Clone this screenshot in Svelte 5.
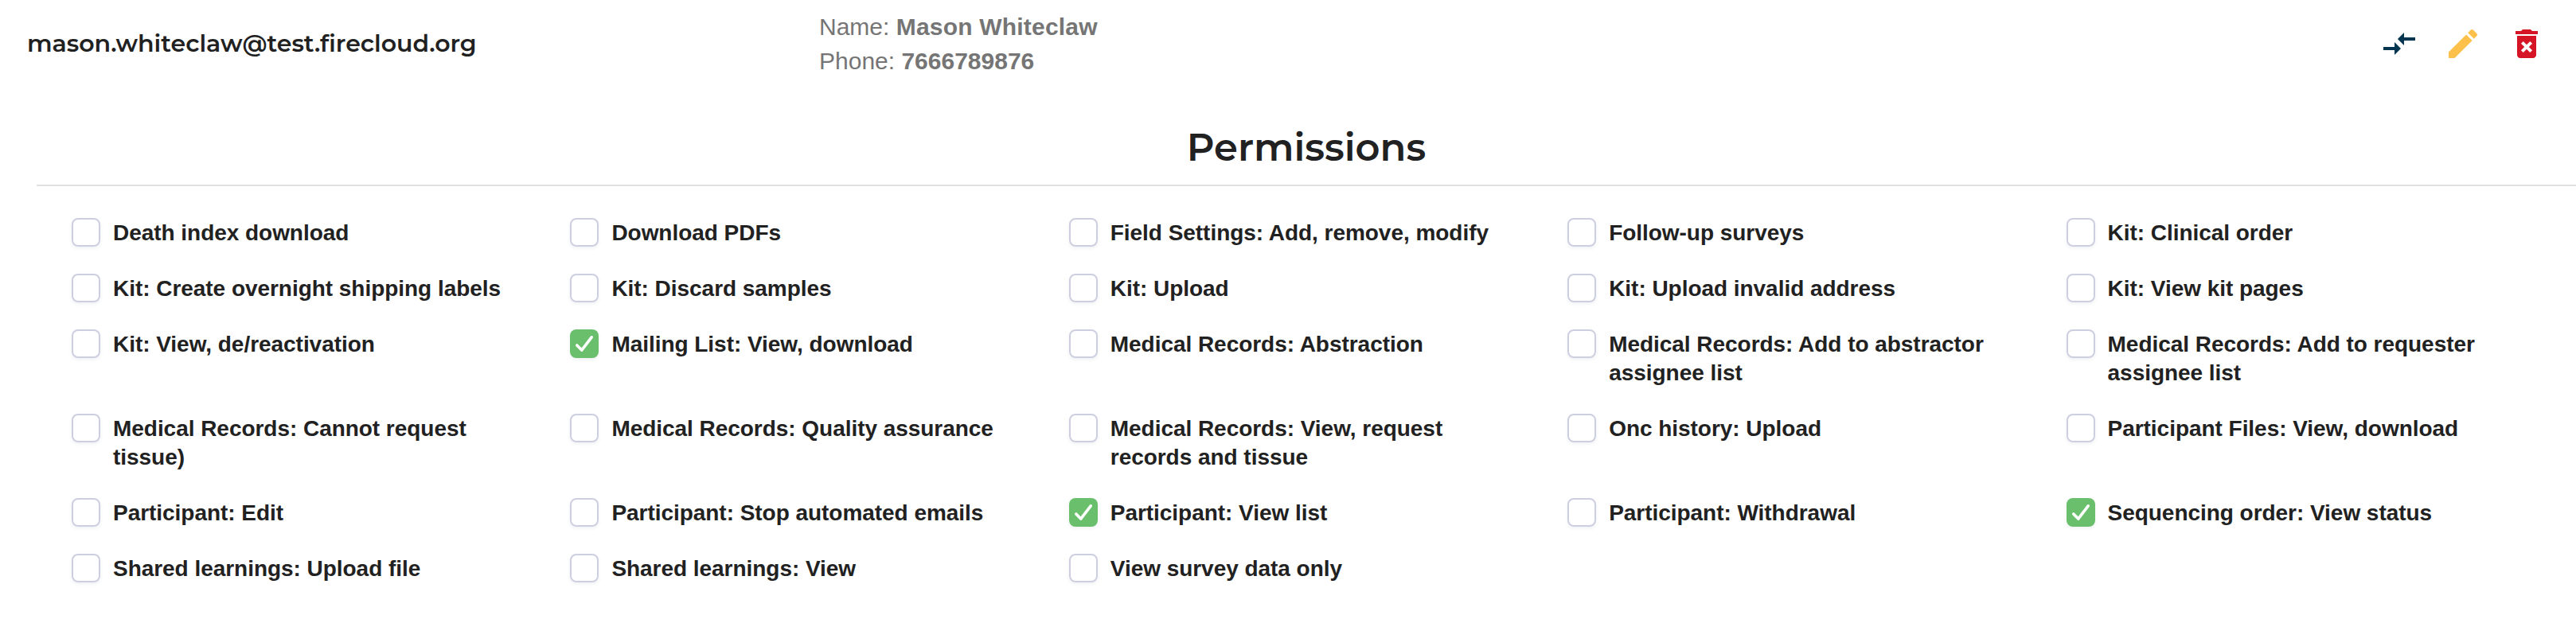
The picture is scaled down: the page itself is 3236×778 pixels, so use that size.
<script>
  const user = {
    email: 'mason.whiteclaw@test.firecloud.org',
    name: 'Mason Whiteclaw',
    phone: '7666789876'
  };

  let permissions = $state([
    { label: 'Death index download', checked: false },
    { label: 'Download PDFs', checked: false },
    { label: 'Field Settings: Add, remove, modify', checked: false },
    { label: 'Follow-up surveys', checked: false },
    { label: 'Kit: Clinical order', checked: false },
    { label: 'Kit: Create overnight shipping labels', checked: false },
    { label: 'Kit: Discard samples', checked: false },
    { label: 'Kit: Upload', checked: false },
    { label: 'Kit: Upload invalid address', checked: false },
    { label: 'Kit: View kit pages', checked: false },
    { label: 'Kit: View, de/reactivation', checked: false },
    { label: 'Mailing List: View, download', checked: true },
    { label: 'Medical Records: Abstraction', checked: false },
    { label: 'Medical Records: Add to abstractor assignee list', checked: false },
    { label: 'Medical Records: Add to requester assignee list', checked: false },
    { label: 'Medical Records: Cannot request tissue)', checked: false },
    { label: 'Medical Records: Quality assurance', checked: false },
    { label: 'Medical Records: View, request records and tissue', checked: false },
    { label: 'Onc history: Upload', checked: false },
    { label: 'Participant Files: View, download', checked: false },
    { label: 'Participant: Edit', checked: false },
    { label: 'Participant: Stop automated emails', checked: false },
    { label: 'Participant: View list', checked: true },
    { label: 'Participant: Withdrawal', checked: false },
    { label: 'Sequencing order: View status', checked: true },
    { label: 'Shared learnings: Upload file', checked: false },
    { label: 'Shared learnings: View', checked: false },
    { label: 'View survey data only', checked: false }
  ]);
</script>

<main>
  <header>
    <div class="email">{user.email}</div>
    <div class="details">
      <div>Name: <b class="name">{user.name}</b></div>
      <div>Phone: <b>{user.phone}</b></div>
    </div>
    <div class="actions">
      <button aria-label="Compare">
        <svg viewBox="0 0 24 24" fill="#033550"><path d="M9.01 14H2v2h7.01v3L13 15l-3.99-4v3zm5.98-1v-3H22V8h-7.01V5L11 9l3.99 4z" /></svg>
      </button>
      <button aria-label="Edit">
        <svg viewBox="0 0 24 24" fill="#fcc04b"><path d="M3 17.25V21h3.75L17.81 9.94l-3.75-3.75L3 17.25zM20.71 7.04a1 1 0 0 0 0-1.41l-2.34-2.34a1 1 0 0 0-1.41 0l-1.83 1.83 3.75 3.75 1.83-1.83z" /></svg>
      </button>
      <button aria-label="Delete">
        <svg viewBox="0 0 24 24" fill="#d51526">
          <path d="M6 19c0 1.1.9 2 2 2h8c1.1 0 2-.9 2-2V7H6v12zM15.5 4l-1-1h-5l-1 1H5v2h14V4z" />
          <path d="M9.17 11.17l5.66 5.66M14.83 11.17l-5.66 5.66" stroke="#fff" stroke-width="2" />
        </svg>
      </button>
    </div>
  </header>

  <h1>Permissions</h1>

  <section class="grid">
    {#each permissions as permission}
      <label>
        <input type="checkbox" bind:checked={permission.checked} />
        <span class="box">
          {#if permission.checked}
            <svg viewBox="0 0 36 36" fill="none" stroke="#fff" stroke-width="3.6" stroke-linecap="round" stroke-linejoin="round"><path d="M8.8 20l5.9 6.1L27.200 9.800" /></svg>
          {/if}
        </span>
        <span class="text">{permission.label}</span>
      </label>
    {/each}
  </section>
</main>

<style>
  :global(body) {
    background: #fff;
  }

  main {
    width: 3236px;
    height: 778px;
    overflow: hidden;
    color: #212121;
    font-family: 'Liberation Sans', Arial, sans-serif;
  }

  header {
    display: grid;
    grid-template-columns: 995px 1fr auto;
    height: 110px;
    padding: 0 38px 0 34px;
  }

  .email {
    padding-top: 34px;
    font: 600 30px/42px Montserrat, Inter, sans-serif;
    white-space: nowrap;
  }

  .details {
    padding-top: 12px;
    color: #757575;
    font-size: 30px;
    line-height: 43px;
    white-space: nowrap;
  }

  .name {
    letter-spacing: 0.2px;
  }

  .actions {
    display: flex;
    gap: 32px;
    padding-top: 31px;
  }

  button {
    width: 48px;
    height: 48px;
    padding: 0;
    border: 0;
    background: none;
  }

  button svg {
    display: block;
    width: 48px;
    height: 48px;
  }

  h1 {
    height: 122px;
    margin: 0 0 40px 46px;
    border-bottom: 2px solid #e0e0e0;
    font: 600 48px/150px Montserrat, Inter, sans-serif;
    text-align: center;
  }

  .grid {
    display: grid;
    grid-template-columns: repeat(5, 626.4px);
    row-gap: 34px;
    padding-left: 90px;
  }

  label {
    display: flex;
    align-items: flex-start;
    gap: 16px;
  }

  input {
    position: absolute;
    opacity: 0;
    pointer-events: none;
  }

  .box {
    flex: none;
    width: 36px;
    height: 36px;
    box-sizing: border-box;
    border: 2px solid #cdcfe0;
    border-radius: 8px;
    box-shadow: 0 2px 4px rgba(40, 50, 90, 0.07);
  }

  input:checked + .box {
    border: 0;
    background: #69bf6b;
  }

  .box svg {
    display: block;
    width: 36px;
    height: 36px;
  }

  .text {
    width: 510px;
    margin-bottom: -1px;
    padding-top: 1px;
    font-size: 28px;
    font-weight: 700;
    line-height: 36px;
    letter-spacing: -0.04px;
  }
</style>
